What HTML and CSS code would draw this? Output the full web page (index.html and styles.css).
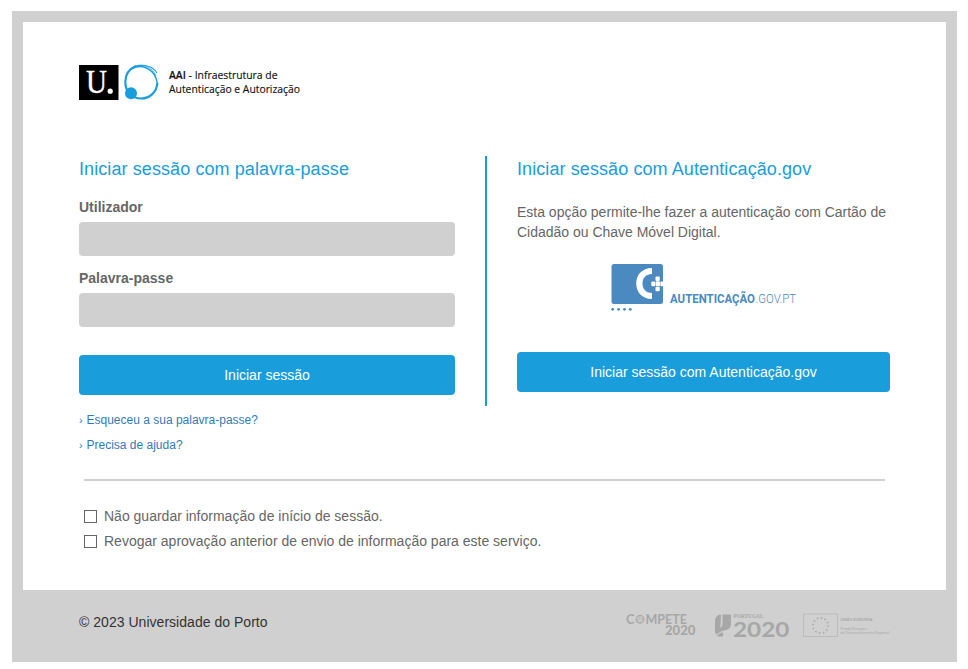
FILE: index.html
```html
<!DOCTYPE html>
<html lang="pt">
<head>
<meta charset="utf-8">
<title>Universidade do Porto</title>
<link rel="stylesheet" href="styles.css">
</head>
<body>
<div class="frame">
  <main class="card">
    <header class="brand">
      <svg width="230" height="40" viewBox="0 0 230 40">
        <rect y="1" width="39.5" height="35" fill="#000"/>
        <text class="brand-u" x="7" y="29" textLength="21" lengthAdjust="spacingAndGlyphs">U</text>
        <circle cx="31.200" cy="27.200" r="2.600" fill="#fff"/>
        <g fill="none" stroke="#1a9ddb">
          <path d="M57 2C50 5 46.300 11 46.300 18C46.300 28 53 34.500 62 34.500C71 34.500 77.800 28 78.300 19" stroke-width="2.200"/>
          <path d="M52 5.500C60 -1.500 73 .5 78 9" stroke-width="1.100"/>
          <path d="M53 4.500C64 -1 76.500 6 78.200 19" stroke-width="1.500"/>
          <path d="M56 2C64 -.5 73 3 77.200 12" stroke-width=".8"/>
        </g>
        <circle cx="52" cy="29.200" r="6" fill="#1a9ddb"/>
        <text class="brand-text" x="90" y="15" textLength="108.500" lengthAdjust="spacingAndGlyphs"><tspan class="strong">AAI</tspan> - Infraestrutura de</text>
        <text class="brand-text" x="90" y="29" textLength="131" lengthAdjust="spacingAndGlyphs">Autenticação e Autorização</text>
      </svg>
    </header>
    <div class="columns">
      <form class="login">
        <h2>Iniciar sessão com palavra-passe</h2>
        <label for="user">Utilizador</label>
        <input class="field" id="user" type="text">
        <label for="pass">Palavra-passe</label>
        <input class="field" id="pass" type="password">
        <button class="btn login-btn" type="button">Iniciar sessão</button>
        <ul class="links">
          <li><span>›</span><a href="#">Esqueceu a sua palavra-passe?</a></li>
          <li><span>›</span><a href="#">Precisa de ajuda?</a></li>
        </ul>
      </form>
      <section class="gov">
        <h2>Iniciar sessão com Autenticação.gov</h2>
        <p>Esta opção permite-lhe fazer a autenticação com Cartão de Cidadão ou Chave Móvel Digital.</p>
        <svg class="gov-logo" width="186" height="50" viewBox="0 0 186 50">
          <rect x=".5" y="1" width="51.500" height="40" rx="2.500" fill="#4a8ac0"/>
          <path d="M41 5C31 5 25.200 12 25.200 20.500C25.200 29 31 36 41 36V30C35 30 31.500 26 31.500 20.500C31.500 15 35 11 41 11Z" fill="#fff"/>
          <g fill="#fff">
            <rect x="44.500" y="13.500" width="4.200" height="4.500" rx="1"/>
            <rect x="40.300" y="18.500" width="4" height="4.700" rx="1"/>
            <rect x="44.700" y="18.300" width="4.500" height="5" rx="1"/>
            <rect x="49.500" y="18.500" width="3" height="4.700" rx="1"/>
            <rect x="44.500" y="23.700" width="4.200" height="4.500" rx="1"/>
          </g>
          <g fill="#4a8ac0"><circle cx="1.700" cy="46.300" r="1.400"/><circle cx="7.500" cy="46.300" r="1.400"/><circle cx="13.500" cy="46.300" r="1.400"/><circle cx="19.300" cy="46.300" r="1.400"/></g>
          <text class="gov-bold" x="59" y="39.500" textLength="85" lengthAdjust="spacingAndGlyphs">AUTENTICAÇÃO</text>
          <text class="gov-light" x="144.500" y="39.500" textLength="40.500" lengthAdjust="spacingAndGlyphs">.GOV.PT</text>
        </svg>
        <button class="btn" type="button">Iniciar sessão com Autenticação.gov</button>
      </section>
    </div>
    <hr>
    <div class="options">
      <label><input type="checkbox"><span>Não guardar informação de início de sessão.</span></label>
      <label><input type="checkbox"><span>Revogar aprovação anterior de envio de informação para este serviço.</span></label>
    </div>
  </main>
  <footer>
    <span class="copyright">© 2023 Universidade do Porto</span>
    <svg class="sponsors" width="266" height="30" viewBox="0 0 266 30">
      <g class="sponsor" fill="#a7a7a7">
        <text x="2" y="11.900" font-size="12.500" textLength="8.500" lengthAdjust="spacingAndGlyphs">C</text>
        <circle cx="16" cy="7.300" r="4" fill="#bcbcbc" stroke="#a7a7a7"/>
        <path d="M13 4.500Q15 9 19 10M14 10Q17 9 18 4" fill="none" stroke="#cfcfcf"/>
        <text x="21.500" y="11.900" font-size="12.500" textLength="41.500" lengthAdjust="spacingAndGlyphs">MPETE</text>
        <text class="heavy" x="41" y="23" font-size="12.500" textLength="30.500" lengthAdjust="spacingAndGlyphs">2020</text>
        <path d="M97 2.500Q91 2.500 91 10V21Q96 19 96.500 14Z"/>
        <path d="M98.500 2.500H107V12Q107 17 102 18Q96 19 92 23Q91 18 96 16Q98.500 15 98.500 11Z"/>
        <path d="M93 24.500Q95 20.500 99 20.500V24.500Z"/>
        <text class="slab" x="109.500" y="6.300" font-size="6.300" textLength="30" lengthAdjust="spacingAndGlyphs">PORTUGAL</text>
        <text x="109" y="24.700" font-size="21" textLength="56.500" lengthAdjust="spacingAndGlyphs">2020</text>
      </g>
      <rect x="179.500" y="2" width="34" height="22.500" fill="none" stroke="#bcbcbc"/>
      <circle cx="196.500" cy="13.500" r="7.600" fill="none" stroke="#aaa" stroke-width="1.700" stroke-dasharray="1.500 2.479"/>
      <g class="eu">
        <text x="216.500" y="8.700" textLength="32" lengthAdjust="spacingAndGlyphs" font-weight="bold">UNIÃO EUROPEIA</text>
        <text x="216.500" y="17.500" textLength="26" lengthAdjust="spacingAndGlyphs">Fundo Europeu</text>
        <text x="216.500" y="22" textLength="48.500" lengthAdjust="spacingAndGlyphs">de Desenvolvimento Regional</text>
      </g>
    </svg>
  </footer>
</div>
</body>
</html>
```
FILE: styles.css
```css
* { box-sizing: border-box; }
body {
  margin: 0;
  padding: 11px 11px 0 12px;
  background: #fff;
  color: #666;
  font: 14px/20px "Liberation Sans", Arial, sans-serif;
}
.frame {
  height: 651px;
  padding: 11px 11px 0;
  background: #d0d0d0;
}
.card {
  height: 568px;
  padding: 42px 56px 0;
  background: #fff;
}
.brand { height: 92px; }
.brand svg { display: block; overflow: visible; }
.brand-u { fill: #fff; stroke: #fff; stroke-width: .4px; font: 34px "Liberation Serif", serif; }
.brand-text { fill: #111; stroke: #111; stroke-width: .15px; font: 11px "Open Sans", sans-serif; }
.strong { font-weight: 600; }
.columns {
  display: grid;
  grid-template-columns: 376px 405px;
  column-gap: 30px;
  align-items: start;
}
h2 {
  margin: 0;
  color: #1a9ddb;
  font-size: 18px;
  font-weight: 400;
  line-height: 26px;
  letter-spacing: .09px;
}
.login { height: 323px; }
.login label {
  display: block;
  margin-top: 12px;
  font-weight: bold;
}
.login h2 + label { margin-top: 15px; }
.field {
  display: block;
  width: 100%;
  height: 34px;
  margin-top: 5px;
  border: 0;
  border-radius: 4px;
  background: #d0d0d0;
}
.btn {
  display: block;
  width: 100%;
  height: 40px;
  padding: 0;
  border: 0;
  border-radius: 4px;
  background: #1a9ddb;
  color: #fff;
  font: 14px/20px "Liberation Sans", Arial, sans-serif;
}
.login-btn { margin-top: 28px; }
.links {
  margin: 13px 0 0;
  padding: 0;
  list-style: none;
  font-size: 12px;
  line-height: 25px;
}
.links span {
  display: inline-block;
  width: 7.5px;
  color: #1a7db6;
  font-size: 11px;
}
.links a { color: #337ab7; text-decoration: none; }
.gov {
  height: 250px;
  padding-left: 30px;
  border-left: 2px solid #1a9ddb;
}
.gov p { margin: 20px 0 21px; letter-spacing: -.01px; }
.gov-logo { display: block; margin: 0 0 39px 94px; }
hr {
  height: 2px;
  margin: 0 5px;
  border: 0;
  background: #d0d0d0;
}
.options { padding: 23px 5px 0; }
.options label {
  display: flex;
  align-items: center;
  gap: 7px;
  height: 25px;
}
.options span { padding-bottom: 2px; }
.options input {
  appearance: none;
  width: 13px;
  height: 13px;
  margin: 0;
  border: 1px solid #666;
  background: #fff;
}
footer {
  display: flex;
  justify-content: space-between;
  align-items: flex-start;
  padding: 22px 56px 0;
  color: #333;
}
.copyright { letter-spacing: .03px; }
.sponsors { overflow: visible; }
.sponsor { font-family: Lato, sans-serif; font-weight: bold; }
.heavy { font-weight: 900; }
.slab { font-family: "Liberation Serif", serif; }
.eu { fill: #aaa; font: 4px "Liberation Sans", sans-serif; }
.gov-bold { fill: #4a8ac0; font: bold 12px Roboto, sans-serif; }
.gov-light { fill: #4a8ac0; font: 300 12px Roboto, sans-serif; }
```
